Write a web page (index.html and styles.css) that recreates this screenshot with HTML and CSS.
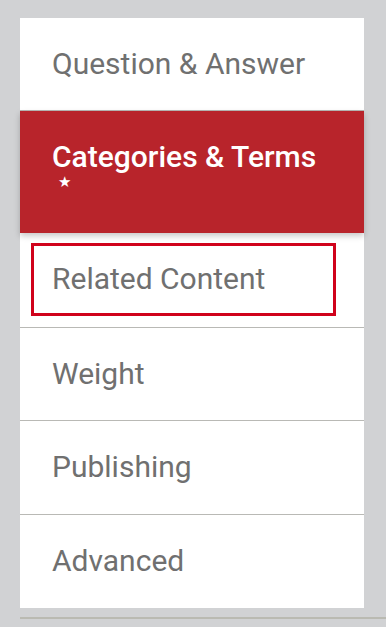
FILE: index.html
```html
<!DOCTYPE html>
<html lang="en">
<head>
<meta charset="utf-8">
<link rel="stylesheet" href="styles.css">
</head>
<body>
<nav class="menu">
  <div class="item first">Question &amp; Answer</div>
  <div class="item active">
    <div class="title">Categories &amp; Terms</div>
    <div class="star">&#9733;</div>
  </div>
  <div class="item focus"><span class="focus-box">Related Content</span></div>
  <div class="item">Weight</div>
  <div class="item">Publishing</div>
  <div class="item last">Advanced</div>
</nav>
<div class="rule"></div>
</body>
</html>
```
FILE: styles.css
```css
html, body {
  margin: 0;
  padding: 0;
}
body {
  background: #d1d2d4;
  font-family: Roboto, "Liberation Sans", sans-serif;
  width: 386px;
  height: 627px;
  overflow: hidden;
  padding-top: 18px;
  box-sizing: border-box;
}
.menu {
  margin-left: 20px;
  width: 344px;
  background: #fff;
  display: flex;
  flex-direction: column;
}
.item {
  padding: 28px 32px 28.5px 32px;
  font-size: 30px;
  line-height: 36px;
  color: #707070;
  border-bottom: 1px solid #b9b9b5;
}
.item.first {
  padding-bottom: 28px;
}
.item.last {
  border-bottom: none;
  padding-bottom: 29px;
}
.item.active {
  background: #b8242b;
  color: #fff;
  font-weight: 500;
  padding-bottom: 0;
  height: 122px;
  box-sizing: border-box;
  border-bottom: none;
  box-shadow: 0 3px 6px rgba(0, 0, 0, 0.22);
  position: relative;
  z-index: 1;
}
.star {
  font-size: 15px;
  line-height: 14px;
  margin-left: 6px;
}
.item.focus {
  padding: 10px 28px 10.5px 11px;
}
.focus-box {
  display: block;
  width: 305px;
  box-sizing: border-box;
  border: 3px solid #d0021b;
  padding: 15px 18px 16px 18px;
}
.rule {
  margin-left: 20px;
  margin-top: 9.5px;
  border-top: 2px solid #babab2;
}
```
